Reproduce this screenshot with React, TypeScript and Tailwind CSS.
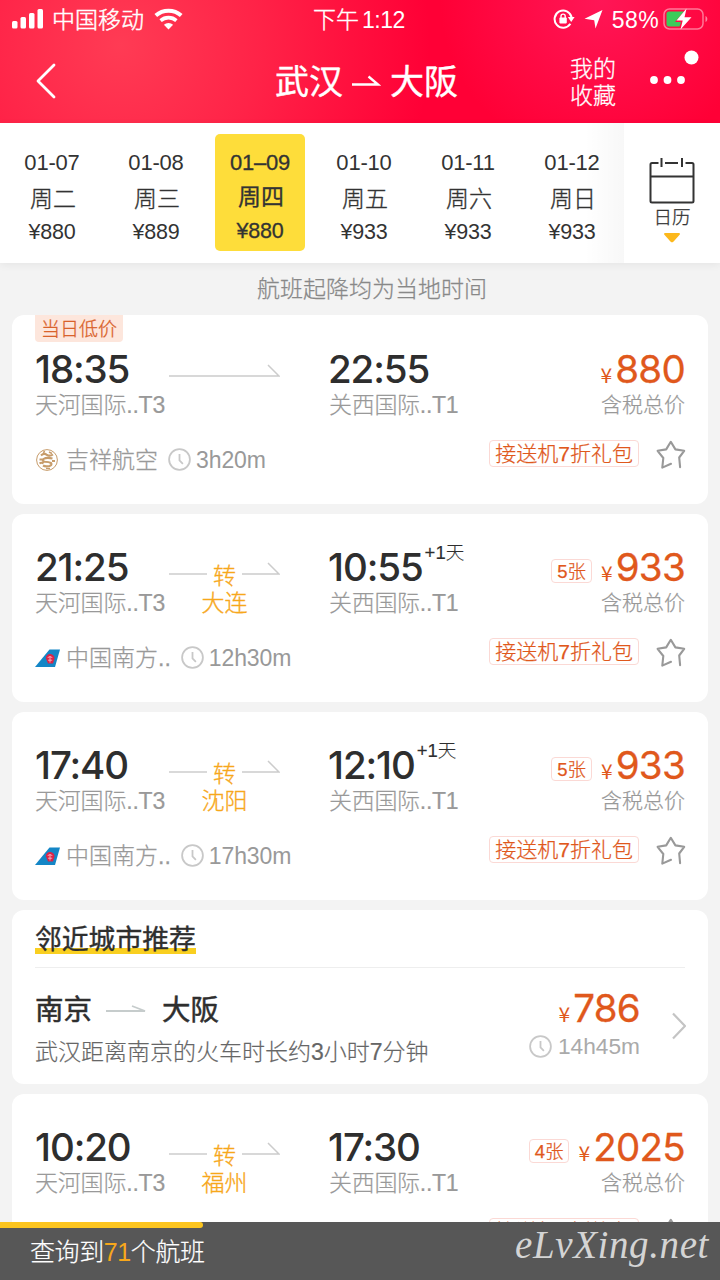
import type { ReactNode } from "react";
import clsx from "clsx";

type Flight = {
    depart: string;
    arrive: string;
    from: string;
    to: string;
    nextDay?: boolean;
    transfer?: string;
    left?: string;
    price: string;
    airline?: string;
    logo?: "juneyao" | "southern";
    duration?: string;
    lowest?: boolean;
};

const days = [
    { date: "01-07", week: "周二", price: "¥880" },
    { date: "01-08", week: "周三", price: "¥889" },
    { date: "01–09", week: "周四", price: "¥880", active: true },
    { date: "01-10", week: "周五", price: "¥933" },
    { date: "01-11", week: "周六", price: "¥933" },
    { date: "01-12", week: "周日", price: "¥933" },
];

const flights: Flight[] = [
    { depart: "18:35", arrive: "22:55", from: "天河国际..T3", to: "关西国际..T1", price: "880", airline: "吉祥航空", logo: "juneyao", duration: "3h20m", lowest: true },
    { depart: "21:25", arrive: "10:55", from: "天河国际..T3", to: "关西国际..T1", nextDay: true, transfer: "大连", left: "5张", price: "933", airline: "中国南方..", logo: "southern", duration: "12h30m" },
    { depart: "17:40", arrive: "12:10", from: "天河国际..T3", to: "关西国际..T1", nextDay: true, transfer: "沈阳", left: "5张", price: "933", airline: "中国南方..", logo: "southern", duration: "17h30m" },
    { depart: "10:20", arrive: "17:30", from: "天河国际..T3", to: "关西国际..T1", transfer: "福州", left: "4张", price: "2025" },
];

const StatusBar: React.FC = () => (
    <div className="flex h-[38px] items-center pl-3 pr-[11px] text-[23px] font-light leading-[38px]">
        <svg width="32" height="20" viewBox="0 0 32 20" fill="currentColor">
            <rect x="0" y="12" width="5.5" height="7.5" rx="1.5" />
            <rect x="8.5" y="8" width="5.5" height="11.5" rx="1.5" />
            <rect x="17" y="4" width="5.5" height="15.5" rx="1.5" />
            <rect x="25.5" y="0" width="5.5" height="19.5" rx="1.5" />
        </svg>
        <span className="ml-2 pt-0.5 [-webkit-text-stroke:0.45px_#fff]">中国移动</span>
        <svg className="ml-2.5" width="30" height="22" viewBox="0 0 30 22" fill="none" stroke="currentColor">
            <path d="M1.8 7.6a19 19 0 0 1 25.4 0" strokeWidth="4" />
            <path d="M6.6 12.6a12 12 0 0 1 15.8 0" strokeWidth="3.6" />
            <path d="M14.5 21.5l-4.6-4.7a6.8 6.8 0 0 1 9.2 0z" fill="currentColor" stroke="none" />
        </svg>
        <span className="ml-[129px] flex gap-[3px] pt-px">
            <span className="[-webkit-text-stroke:0.35px_#fff]">下午</span>
            <span className="tracking-[-0.5px]">1:12</span>
        </span>
        <div className="ml-auto flex items-center">
            <svg width="22" height="22" viewBox="0 0 22 22" fill="none" stroke="currentColor" strokeWidth="2">
                <path d="M17.4 15.8a8.6 8.6 0 1 1 1.2-6.6" />
                <path d="M14.8 9h6.8l-3.4 5z" fill="currentColor" stroke="none" />
                <rect x="6.4" y="9.6" width="7.4" height="5.8" rx="0.8" fill="currentColor" stroke="none" />
                <path d="M8 10V8.2a2.1 2.1 0 0 1 4.2 0V10" strokeWidth="1.4" />
            </svg>
            <svg className="ml-[9px]" width="19" height="20" viewBox="0 0 19 20" fill="currentColor">
                <path d="M18.5 1L11.500 19.500 10.200 11.200 .5 9.800z" />
            </svg>
            <span className="ml-[9px] pt-px tracking-[0.4px]">58%</span>
            <svg className="ml-1" width="46" height="24" viewBox="0 0 46 24" fill="none">
                <rect x="1" y="2" width="39" height="20" rx="5.5" stroke="#fff" strokeOpacity="0.45" strokeWidth="1.5" />
                <path d="M42.5 9v6c2.4-1 2.4-5 0-6z" fill="#fff" fillOpacity="0.5" />
                <path d="M6 4.500h15L12 15h6l-1.500 4.500H6q-2.500 0-2.500-2.500V7q0-2.500 2.500-2.500z" fill="#3ccb5a" />
                <path d="M23.500 1.500L13.500 13.500h6.200L17.500 22.500 28.500 10.200h-7z" fill="#fff" />
            </svg>
        </div>
    </div>
);

const Header: React.FC = () => (
    <header className="h-[123px] shrink-0 bg-[#ff0036] bg-[radial-gradient(circle_at_120px_45px,#ff3b54_0,#ff3a5399_140px,transparent_310px),radial-gradient(circle_at_600px_0px,#ff1656_0,transparent_160px)] text-white">
        <StatusBar />
        <div className="grid h-[85px] grid-cols-[275px_183px_1fr] items-center">
            <svg className="ml-9" width="22" height="36" viewBox="0 0 22 36" fill="none" stroke="currentColor" strokeWidth="2.8" strokeLinecap="round" strokeLinejoin="round">
                <path d="M18 2L2 18l16 16" />
            </svg>
            <h1 className="flex items-center justify-between pt-0.5 text-[34px] leading-[50px] [-webkit-text-stroke:0.4px_#fff]">
                武汉
                <svg width="29" height="16" viewBox="0 0 29 16" fill="none" stroke="currentColor" strokeWidth="2.4">
                    <path d="M0 10.5h26L16.5 2.5" />
                </svg>
                大阪
            </h1>
            <div className="flex items-center pl-[112px]">
                <span className="w-[46px] pt-[5px] text-[23px] font-light leading-[27px] [-webkit-text-stroke:0.3px_#fff]">我的收藏</span>
                <svg className="-mt-7 ml-[34px]" width="50" height="36" viewBox="0 0 50 36" fill="currentColor">
                    <circle cx="4" cy="31" r="3.9" />
                    <circle cx="17.500" cy="31" r="3.9" />
                    <circle cx="31" cy="31" r="3.9" />
                    <circle cx="41.500" cy="8.500" r="7" />
                </svg>
            </div>
        </div>
    </header>
);

const DateBar: React.FC = () => (
    <div className="relative z-10 flex h-[140px] shrink-0 bg-white text-[#333] shadow-[0_2px_8px_rgba(0,0,0,0.06)]">
        {days.map((day) => (
            <div key={day.date} className="flex w-[104px] justify-center pt-[11px]">
                <div
                    className={clsx(
                        "flex h-[117px] w-[90px] flex-col items-center rounded-[5px] pt-[11px] text-[22px]",
                        day.active ? "bg-[#fedd3a] [-webkit-text-stroke:0.3px_#333]" : "font-light",
                    )}
                >
                    <span className="pt-px leading-[34px] tracking-[-0.2px]">{day.date}</span>
                    <span className={clsx("pl-0.5 text-[23px] leading-[35px]", !day.active && "pt-0.5 [-webkit-text-stroke:0.35px_#333]")}>{day.week}</span>
                    <span className={clsx("text-[21.5px] tracking-[-0.2px]", day.active ? "leading-[32px]" : "leading-[31px]")}>{day.price}</span>
                </div>
            </div>
        ))}
        <div className="-ml-10 w-10 bg-gradient-to-r from-transparent to-black/[0.03]" />
        <div className="flex w-24 flex-col items-center pt-[35px]">
            <svg width="46" height="47" viewBox="0 0 46 47" fill="none" stroke="#333" strokeWidth="2">
                <path d="M9.5 5H3q-1.500 0-1.500 1.500V43q0 1.500 1.500 1.500h40q1.500 0 1.500-1.500V6.500q0-1.500-1.500-1.500h-6.500M16 5h13M1.5 18.500h43M12.500 0v9M33 0v9" />
            </svg>
            <span className="text-[18.5px] font-light leading-[25px] [-webkit-text-stroke:0.3px_#333]">日历</span>
            <svg className="mt-[3px]" width="16" height="10" viewBox="0 0 16 10" fill="#fcb81c">
                <path d="M1.2 0h13.6q2 0 .8 1.700L9.600 8.600q-1.600 1.600-3.200 0L.4 1.700Q-.8 0 1.200 0z" />
            </svg>
        </div>
    </div>
);

const Clock: React.FC = () => (
    <svg width="23" height="23" viewBox="0 0 23 23" fill="none" stroke="#c8c8c8" strokeWidth="1.8">
        <circle cx="11.5" cy="11.5" r="10.4" />
        <path d="M11.5 6v6.500l3.400 3.400" />
    </svg>
);

const Star: React.FC = () => (
    <svg width="30" height="30" viewBox="0 0 30 30" fill="none" stroke="#999" strokeWidth="2.1" strokeLinecap="round" strokeLinejoin="round">
        <path d="M15 23.800L6.300 27.600l1-9.600L1.600 10.800l8.600-1.400L14.800 1.800l4.600 7.600 8.800 1.400-5 6.700.9 9.700" />
    </svg>
);

const AirlineLogo: React.FC<{ name: Flight["logo"] }> = ({ name }) =>
    name === "juneyao" ? (
        <svg width="24" height="24" viewBox="0 0 24 24" fill="none" stroke="#c79c6b">
            <circle cx="12" cy="12" r="10.4" strokeWidth="1" />
            <path d="M6 7.500q3-3 6-.5 3 1.500 6-.5M17.500 10.500q-6-1.500-9 .5-2 2 1.500 2.800 4 .2 6 1.200 1.500 2-1.500 3-4 1-6.500-.5M4.500 11.500h4M4.500 15.500q2-1.500 4 0M17 13h3" strokeWidth="2.1" />
            <path d="M8 4.500l2-1M14 4l3 1.500M11 20.500h4" strokeWidth="1.400" />
        </svg>
    ) : (
        <svg width="25" height="24" viewBox="0 0 25 24">
            <path d="M0 21L14.500 3.500H25L20 21z" fill="#1486c6" />
            <path d="M15 8c2.500 0 4.800 2.200 4.500 4.500L18 17.500h-5L10.800 12c0-2.300 1.900-4 4.200-4z" fill="#dc2347" />
            <path d="M15 10v6.500M12.700 11.500q2.300-1.500 4.600 0M13 14.200h4.200" stroke="#f9c3cf" strokeWidth="0.8" fill="none" />
        </svg>
    );

const Price: React.FC<{ value: string }> = ({ value }) => (
    <span className="flex items-baseline pt-[5px] text-[#e0581c]">
        <span className="mr-[3px] font-['Noto_Sans_CJK_SC'] text-[21px] font-normal">¥</span>
        <span className="font-['Inter'] text-[38.5px] font-normal tracking-[-0.7px] [-webkit-text-stroke:0.3px_#e0581c]">{value}</span>
    </span>
);

const Tag: React.FC<{ className?: string; children: ReactNode }> = ({ className, children }) => (
    <span className={clsx("rounded-[4px] border border-[#fbd9d5] font-light text-[#e0581c] [-webkit-text-stroke:0.25px_#e0581c]", className)}>{children}</span>
);

const Route: React.FC<{ transfer?: string }> = ({ transfer }) => (
    <div className="flex w-[111px] flex-col items-center text-[#f7a71b] [-webkit-text-stroke:0.35px_#f7a71b]">
        <div className="flex h-[41px] w-full items-end justify-between">
            {transfer ? (
                <>
                    <svg className="mb-3" width="38" height="14" fill="none" stroke="#ccc" strokeWidth="1.5">
                        <path d="M0 12h38" />
                    </svg>
                    <span className="-mb-px text-[23px] leading-[25px]">转</span>
                    <svg className="mb-3" width="38" height="14" fill="none" stroke="#ccc" strokeWidth="1.5">
                        <path d="M0 12h37L26 1" />
                    </svg>
                </>
            ) : (
                <svg className="mb-3" width="111" height="14" fill="none" stroke="#ccc" strokeWidth="1.5">
                    <path d="M0 12h110L99 1" />
                </svg>
            )}
        </div>
        {transfer && <span className="pt-px text-[23px] leading-[28px]">{transfer}</span>}
    </div>
);

const FlightCard: React.FC<{ flight: Flight }> = ({ flight }) => (
    <article
        className={clsx(
            "relative shrink-0 rounded-xl bg-white px-[23px] font-light text-[#999]",
            flight.lowest ? "h-[189px] pt-[34px]" : "h-[188px] pt-[33px]",
        )}
    >
        {flight.lowest && (
            <span className="absolute left-[23px] top-0 h-[27px] rounded-b-[4px] bg-[#fde6dc] px-[6px] text-[19px] leading-[30px] text-[#d9622b] [-webkit-text-stroke:0.3px_#d9622b]">
                当日低价
            </span>
        )}
        <div className="grid h-[72px] grid-cols-[134px_160px_1fr_auto]">
            <div>
                <div className="h-10 whitespace-nowrap font-['Inter'] text-[38.5px] font-medium leading-10 tracking-[-1.1px] text-[#2e2e2e]">{flight.depart}</div>
                <div className="whitespace-nowrap text-[23px] leading-8 tracking-[-0.2px] [-webkit-text-stroke:0.2px_#999]">{flight.from}</div>
            </div>
            <Route transfer={flight.transfer} />
            <div>
                <div className="-ml-px flex h-10 whitespace-nowrap text-[#2e2e2e]">
                    <span className="font-['Inter'] text-[38.5px] font-medium leading-10 tracking-[-1.1px]">{flight.arrive}</span>
                    {flight.nextDay && <span className="-mt-1.5 ml-[2px] text-[18.5px] leading-6 [-webkit-text-stroke:0.15px_#2e2e2e]">+1天</span>}
                </div>
                <div className="whitespace-nowrap text-[23px] leading-8 tracking-[-0.3px] [-webkit-text-stroke:0.2px_#999]">{flight.to}</div>
            </div>
            <div className="flex flex-col items-end">
                <div className="flex h-10 items-center leading-10">
                    {flight.left && <Tag className="mr-[9px] mt-2 h-6 px-[5px] text-[18.5px] leading-[24px]">{flight.left}</Tag>}
                    <Price value={flight.price} />
                </div>
                <div className="pt-px text-[21px] leading-[30px] [-webkit-text-stroke:0.25px_#999]">含税总价</div>
            </div>
        </div>
        <div className="flex h-[60px] items-center">
            {flight.airline && (
                <div className="flex items-center pt-[17px] text-[23px] leading-8">
                    <span className="w-[25px]">
                        <AirlineLogo name={flight.logo} />
                    </span>
                    <span className="ml-[6px] [-webkit-text-stroke:0.25px_#999]">{flight.airline}</span>
                    <span className="ml-[10px]">
                        <Clock />
                    </span>
                    <span className="ml-[5px] tracking-[-0.1px]">{flight.duration}</span>
                </div>
            )}
            <Tag className="ml-auto mt-[5px] h-[27px] px-[5px] text-[21px] leading-[26px]">接送机7折礼包</Tag>
            <span className="-mr-px ml-[17px] mt-[7px]">
                <Star />
            </span>
        </div>
    </article>
);

const NearbyCard: React.FC = () => (
    <article className="h-[174px] shrink-0 rounded-xl bg-white px-[23px] pt-3">
        <div className="flex h-[46px] items-start border-b border-[#eee]">
            <h2 className="rounded-b-[3px] bg-[linear-gradient(#f9cf20,#f9cf20)] bg-[length:100%_6px] bg-[position:0_26px] bg-no-repeat pt-px text-[26.8px] leading-[34px] text-[#2e2e2e] [-webkit-text-stroke:0.4px_#2e2e2e]">
                邻近城市推荐
            </h2>
        </div>
        <div className="flex items-start pt-[20px]">
            <div>
                <div className="flex h-10 items-center pt-1 text-[28.5px] leading-10 text-[#2e2e2e] [-webkit-text-stroke:0.5px_#2e2e2e]">
                    南京
                    <svg className="mx-[14px]" width="42" height="10" fill="none" stroke="#c6cccc" strokeWidth="1.8">
                        <path d="M0 6h39L26 1" />
                    </svg>
                    大阪
                </div>
                <div className="mt-2 text-[23px] font-light leading-8 text-[#666] [-webkit-text-stroke:0.2px_#666]">武汉距离南京的火车时长约3小时7分钟</div>
            </div>
            <div className="ml-auto mr-[32px] flex flex-col items-end">
                <div className="flex h-10 items-center leading-10">
                    <Price value="786" />
                </div>
                <div className="mt-[2px] flex items-center gap-[6px] text-[22.7px] leading-8 text-[#aaa]">
                    <Clock />
                    <span>14h45m</span>
                </div>
            </div>
            <svg className="-mr-px mt-[24px]" width="14" height="28" fill="none" stroke="#c4c4c4" strokeWidth="2.2">
                <path d="M1 1.500L13 14 1 26.500" />
            </svg>
        </div>
    </article>
);

const Footer: React.FC = () => (
    <footer className="relative flex h-[58px] shrink-0 items-center justify-between bg-[#575757] pl-[30px] pr-[11px] text-white">
        <div className="absolute left-0 top-0 h-[6px] w-[203px] rounded-r bg-[#fcc51f]" />
        <p className="pt-px text-[25px] font-light leading-[34px] tracking-[-0.4px] [-webkit-text-stroke:0.2px]">
            查询到<span className="text-[#f7a71b] [-webkit-text-stroke:0px]">71</span>个航班
        </p>
        <span className="-mt-3 font-['Liberation_Serif'] text-[39px] italic leading-[40px] tracking-[0.6px] text-[#d4d4d4]">eLvXing.net</span>
    </footer>
);

export default function App() {
    return (
        <div className="flex h-[1280px] w-[720px] flex-col overflow-hidden bg-[#f3f3f3] font-['Liberation_Sans','Noto_Sans_CJK_SC',sans-serif]">
            <Header />
            <DateBar />
            <main className="flex min-h-0 flex-1 flex-col gap-[10px] overflow-hidden px-3">
                <p className="-mb-[10px] h-[52px] shrink-0 pl-6 text-center text-[23px] font-light leading-[53px] text-[#888] [-webkit-text-stroke:0.25px_#888]">
                    航班起降均为当地时间
                </p>
                {flights.slice(0, 3).map((flight) => (
                    <FlightCard key={flight.depart} flight={flight} />
                ))}
                <NearbyCard />
                <FlightCard flight={flights[3]} />
            </main>
            <Footer />
        </div>
    );
}
